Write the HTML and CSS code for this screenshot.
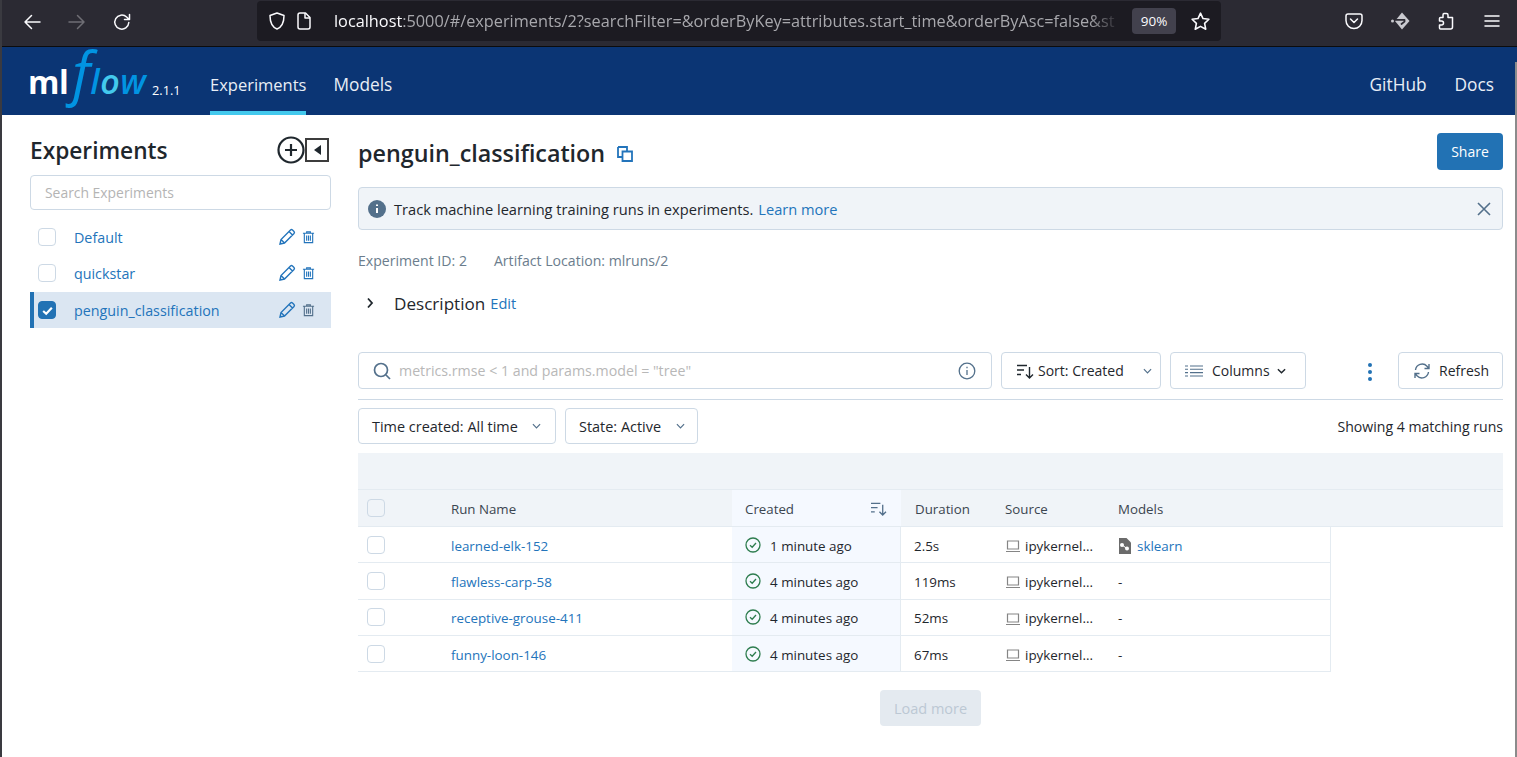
FILE: index.html
```html
<!DOCTYPE html>
<html lang="en">
<head>
<meta charset="utf-8">
<title>MLflow Experiments</title>
<link rel="stylesheet" href="styles.css">
</head>
<body>
<div class="scrollbar"></div>
<div class="browser">
  <div class="tool-group">
    <svg class="tool-ic" viewBox="0 0 20 20"><path d="M18 10H3M9.500 3.500 3 10l6.500 6.500"/></svg>
    <svg class="tool-ic dim" viewBox="0 0 20 20"><path d="M2 10h15M10.500 3.500 17 10l-6.500 6.500"/></svg>
    <svg class="tool-ic" viewBox="0 0 20 20"><path d="M16.800 10.500a7 7 0 1 1-2.200-5.500L17 7.300M17.500 2.500v5h-5"/></svg>
  </div>
  <div class="urlbar">
    <svg class="url-ic" viewBox="0 0 20 20"><path d="M10 2 3 4.500C3 11 5 16 10 18c5-2 7-7 7-13.500z"/></svg>
    <svg class="url-ic" viewBox="0 0 20 20"><path d="M4 4a2 2 0 0 1 2-2h5.500L16 6.500V16a2 2 0 0 1-2 2H6a2 2 0 0 1-2-2z"/><path d="M11 2v5h5"/></svg>
    <div class="url"><span class="url-host">localhost</span>:5000/#/experiments/2?searchFilter=&amp;orderByKey=attributes.start_time&amp;orderByAsc=false&amp;st</div>
    <span class="zoom-badge">90%</span>
    <svg class="url-ic star" viewBox="0 0 20 20"><path d="m10 2 2.400 5.200 5.600.7-4.100 3.900 1.100 5.600-5-2.800-5 2.800 1.100-5.600L2 7.900l5.600-.7z"/></svg>
  </div>
  <div class="tool-right">
    <svg class="tool-ic" viewBox="0 0 20 20"><path d="M4 3h12a2 2 0 0 1 2 2v4.500a8 8 0 0 1-16 0V5a2 2 0 0 1 2-2z"/><path d="m6.500 8 3.500 3.500L13.500 8"/></svg>
    <svg class="tool-ic solid" viewBox="0 0 20 20"><path d="M12 1.500 19.500 10 12 18.500 5 10z"/><circle cx="2.500" cy="10" r="1.500"/><path class="diamond-cut" d="M5.500 8.800h9v1.800l-3 2.400"/></svg>
    <svg class="tool-ic" viewBox="0 0 20 20"><path d="M8 2.500h2.500a1.500 1.500 0 0 1 1.500 1.500v2.500h4.500V16a2 2 0 0 1-2 2H4.500a1 1 0 0 1-1-1v-3h2a2 2 0 0 0 0-4h-2V7.500A1 1 0 0 1 4.500 6.500H7V4a1.500 1.500 0 0 1 1-1.500z"/></svg>
    <svg class="tool-ic" viewBox="0 0 20 20"><path d="M3 5h14M3 10h14M3 15h14"/></svg>
  </div>
</div>

<header class="topbar">
  <div class="logo"><span class="logo-ml">ml</span><span class="logo-f">f</span><span class="logo-low">l<span class="logo-o">o</span>w</span></div>
  <span class="version">2.1.1</span>
  <nav class="nav">
    <a class="nav-item active">Experiments</a>
    <a class="nav-item">Models</a>
  </nav>
  <nav class="nav-right">
    <a class="nav-item">GitHub</a>
    <a class="nav-item">Docs</a>
  </nav>
</header>

<div class="layout">
  <aside class="sidebar">
    <div class="side-head">
      <h1 class="side-title">Experiments</h1>
      <svg class="side-add" viewBox="0 0 28 28"><circle cx="14" cy="14" r="12.500"/><path d="M14 8v12M8 14h12"/></svg>
      <span class="side-collapse"><i class="tri"></i></span>
    </div>
    <div class="side-search">Search Experiments</div>
    <ul class="exp-list">
      <li class="exp">
        <span class="check"></span><span class="exp-name">Default</span>
        <svg class="act pen" viewBox="0 0 18 18"><path d="M2 16l1-4.500L12.500 2a1.500 1.500 0 0 1 2 0l1.500 1.500a1.500 1.500 0 0 1 0 2L6.500 15zM3 11.500 6.500 15M11 3.500 14.500 7"/></svg>
        <svg class="act bin" viewBox="0 0 14 14"><path d="M1 3h12M5 3V1.500h4V3M2.500 3v10h9V3M5 5.500v5.500M7 5.500v5.500M9 5.500v5.500"/></svg>
      </li>
      <li class="exp">
        <span class="check"></span><span class="exp-name">quickstar</span>
        <svg class="act pen" viewBox="0 0 18 18"><path d="M2 16l1-4.500L12.500 2a1.500 1.500 0 0 1 2 0l1.500 1.500a1.500 1.500 0 0 1 0 2L6.500 15zM3 11.500 6.500 15M11 3.500 14.500 7"/></svg>
        <svg class="act bin" viewBox="0 0 14 14"><path d="M1 3h12M5 3V1.500h4V3M2.500 3v10h9V3M5 5.500v5.500M7 5.500v5.500M9 5.500v5.500"/></svg>
      </li>
      <li class="exp selected">
        <span class="check on"><svg viewBox="0 0 12 12"><path d="m2 6.500 2.800 2.500L10 3.500"/></svg></span><span class="exp-name">penguin_classification</span>
        <svg class="act pen" viewBox="0 0 18 18"><path d="M2 16l1-4.500L12.500 2a1.500 1.500 0 0 1 2 0l1.500 1.500a1.500 1.500 0 0 1 0 2L6.500 15zM3 11.500 6.500 15M11 3.500 14.500 7"/></svg>
        <svg class="act bin grey" viewBox="0 0 14 14"><path d="M1 3h12M5 3V1.500h4V3M2.500 3v10h9V3M5 5.500v5.500M7 5.500v5.500M9 5.500v5.500"/></svg>
      </li>
    </ul>
  </aside>

  <main class="content">
    <div class="title-row">
      <h2 class="exp-title">penguin_classification</h2>
      <svg class="copy" viewBox="0 0 16 16"><path d="M1 1h9v4M5 11H1V1"/><path d="M5.500 5.500h9.500v9.500H5.500z"/></svg>
      <button class="share">Share</button>
    </div>
    <div class="banner">
      <svg class="banner-ic" viewBox="0 0 18 18"><circle cx="9" cy="9" r="9"/><path d="M9 8v5M9 4.500v1.500"/></svg>
      <span class="banner-text">Track machine learning training runs in experiments.</span>
      <a class="link banner-link">Learn more</a>
      <svg class="banner-x" viewBox="0 0 14 14"><path d="m1 1 12 12M13 1 1 13"/></svg>
    </div>
    <div class="meta"><span>Experiment ID: 2</span><span>Artifact Location: mlruns/2</span></div>
    <div class="desc">
      <svg class="desc-caret" viewBox="0 0 8 12"><path d="m2 1.500 4 4.500-4 4.500"/></svg>
      <span class="desc-label">Description</span>
      <a class="link desc-edit">Edit</a>
    </div>

    <div class="filters">
      <div class="search-box">
        <svg class="search-ic" viewBox="0 0 18 18"><circle cx="8" cy="8" r="6.500"/><path d="m13 13 4 4"/></svg>
        <span class="search-ph">metrics.rmse &lt; 1 and params.model = "tree"</span>
        <svg class="info-ic" viewBox="0 0 18 18"><circle cx="9" cy="9" r="7.800"/><path d="M9 8v5M9 4.800v1.400"/></svg>
      </div>
      <button class="ctl sort">
        <svg class="sort-ic" viewBox="0 0 18 16"><path d="M1 2.500h10M1 7h7M1 11.500h4M13.500 4v11M10 11.500l3.500 3.500 3.500-3.500"/></svg>
        <span>Sort: Created</span>
        <svg class="chev" viewBox="0 0 10 6"><path d="m1 1 4 4 4-4"/></svg>
      </button>
      <button class="ctl cols">
        <svg class="cols-ic" viewBox="0 0 18 12"><path d="M0 1h3M5 1h13M0 4.300h3M5 4.300h13M0 7.600h3M5 7.600h13M0 11h3M5 11h13"/></svg>
        <span>Columns</span>
        <svg class="chev dark" viewBox="0 0 10 6"><path d="m1 1 4 4 4-4"/></svg>
      </button>
      <span class="kebab"><i></i><i></i><i></i></span>
      <button class="ctl refresh">
        <svg class="refresh-ic" viewBox="0 0 18 18"><path d="M2.500 8A6.700 6.700 0 0 1 14 4.200L16 6.500M16 2v4.500h-4.500M15.500 10A6.700 6.700 0 0 1 4 13.800L2 11.500M2 16v-4.500h4.500"/></svg>
        <span>Refresh</span>
      </button>
    </div>

    <div class="filters2">
      <button class="ctl time"><span>Time created: All time</span><svg class="chev" viewBox="0 0 10 6"><path d="m1 1 4 4 4-4"/></svg></button>
      <button class="ctl state"><span>State: Active</span><svg class="chev" viewBox="0 0 10 6"><path d="m1 1 4 4 4-4"/></svg></button>
      <span class="matching">Showing 4 matching runs</span>
    </div>

    <div class="table">
      <div class="group-row"></div>
      <div class="row head">
        <div class="c-check"><span class="check head-check"></span></div>
        <div class="c-name"><span class="cell-text">Run Name</span></div>
        <div class="c-created head-created"><span class="cell-text">Created</span><svg class="sort-small" viewBox="0 0 18 16"><path d="M1 2.500h10M1 7h7M1 11.500h4M13.500 4v11M10 11.500l3.500 3.500 3.500-3.500"/></svg></div>
        <div class="c-dur"><span class="cell-text">Duration</span></div>
        <div class="c-src"><span class="cell-text">Source</span></div>
        <div class="c-mod"><span class="cell-text">Models</span></div>
      </div>
      <div class="row body">
        <div class="c-check"><span class="check"></span></div>
        <div class="c-name"><a class="link cell-text">learned-elk-152</a></div>
        <div class="c-created"><svg class="ok" viewBox="0 0 16 16"><circle cx="8" cy="8" r="7"/><path d="m5 8.200 2.200 2.100L11 6"/></svg><span class="cell-text">1 minute ago</span></div>
        <div class="c-dur"><span class="cell-text">2.5s</span></div>
        <div class="c-src"><svg class="laptop" viewBox="0 0 16 14"><path d="M2.500 2h11v8h-11zM1 12.500h14"/></svg><span class="cell-text">ipykernel...</span></div>
        <div class="c-mod"><svg class="model" viewBox="0 0 13 16"><path d="M1 0h7.500L13 4.500V16H1z"/><path d="M4 7l5 3.500" class="hole-line"/><circle cx="4" cy="7" r="2" class="hole"/><circle cx="9" cy="10.500" r="2" class="hole"/></svg><a class="link cell-text">sklearn</a></div>
      </div>
      <div class="row body">
        <div class="c-check"><span class="check"></span></div>
        <div class="c-name"><a class="link cell-text">flawless-carp-58</a></div>
        <div class="c-created"><svg class="ok" viewBox="0 0 16 16"><circle cx="8" cy="8" r="7"/><path d="m5 8.200 2.200 2.100L11 6"/></svg><span class="cell-text">4 minutes ago</span></div>
        <div class="c-dur"><span class="cell-text">119ms</span></div>
        <div class="c-src"><svg class="laptop" viewBox="0 0 16 14"><path d="M2.500 2h11v8h-11zM1 12.500h14"/></svg><span class="cell-text">ipykernel...</span></div>
        <div class="c-mod"><span class="cell-text">-</span></div>
      </div>
      <div class="row body">
        <div class="c-check"><span class="check"></span></div>
        <div class="c-name"><a class="link cell-text">receptive-grouse-411</a></div>
        <div class="c-created"><svg class="ok" viewBox="0 0 16 16"><circle cx="8" cy="8" r="7"/><path d="m5 8.200 2.200 2.100L11 6"/></svg><span class="cell-text">4 minutes ago</span></div>
        <div class="c-dur"><span class="cell-text">52ms</span></div>
        <div class="c-src"><svg class="laptop" viewBox="0 0 16 14"><path d="M2.500 2h11v8h-11zM1 12.500h14"/></svg><span class="cell-text">ipykernel...</span></div>
        <div class="c-mod"><span class="cell-text">-</span></div>
      </div>
      <div class="row body">
        <div class="c-check"><span class="check"></span></div>
        <div class="c-name"><a class="link cell-text">funny-loon-146</a></div>
        <div class="c-created"><svg class="ok" viewBox="0 0 16 16"><circle cx="8" cy="8" r="7"/><path d="m5 8.200 2.200 2.100L11 6"/></svg><span class="cell-text">4 minutes ago</span></div>
        <div class="c-dur"><span class="cell-text">67ms</span></div>
        <div class="c-src"><svg class="laptop" viewBox="0 0 16 14"><path d="M2.500 2h11v8h-11zM1 12.500h14"/></svg><span class="cell-text">ipykernel...</span></div>
        <div class="c-mod"><span class="cell-text">-</span></div>
      </div>
    </div>
    <div class="load-wrap"><button class="load">Load more</button></div>
  </main>
</div>
</body>
</html>
```
FILE: styles.css
```css
* { box-sizing: border-box; }
html, body { margin: 0; height: 757px; overflow: hidden; }
body {
  font-family: "Open Sans", sans-serif;
  font-size: 14.1px;
  color: #1f272d;
  background: #fff;
  border-left: 2px solid #3a3a40;
  display: flex;
  flex-direction: column;
}
svg { display: block; flex: none; fill: none; }
h1, h2, ul { margin: 0; padding: 0; }
button { font: inherit; color: inherit; background: #fff; }
a { text-decoration: none; }
.link { color: #2374bb; }
.scrollbar { position: absolute; top: 62px; right: 0; bottom: 0; width: 2.500px; background: #8b8b8b; z-index: 5; }

/* browser chrome */
.browser {
  height: 47px;
  flex: none;
  background: #2b2a33;
  border-bottom: 1px solid #0c0c0d;
  display: flex;
  align-items: flex-start;
  padding-left: 20px;
}
.tool-group { display: flex; gap: 25px; padding-top: 12px; width: 235px; }
.tool-ic { width: 20px; height: 20px; stroke: #fbfbfe; stroke-width: 1.500; stroke-linecap: round; stroke-linejoin: round; }
.tool-ic.dim { stroke: #6f6e75; }
.tool-ic.solid { fill: #c9c9cf; stroke: none; }
.tool-ic .diamond-cut { fill: none; stroke: #2b2a33; stroke-width: 1.800; }
.urlbar {
  margin-top: 1px;
  width: 964px;
  height: 40px;
  background: #1c1b22;
  border-radius: 4px;
  display: flex;
  align-items: center;
  padding: 0 10px;
  color: #a8a8ad;
  font-size: 16.300px;
}
.url-ic { width: 20px; height: 20px; stroke: #fbfbfe; stroke-width: 1.500; stroke-linejoin: round; margin-right: 7px; }
.url {
  width: 786px;
  margin-left: 13px;
  white-space: nowrap;
  overflow: hidden;
  -webkit-mask-image: linear-gradient(to right, #000 96%, transparent);
  mask-image: linear-gradient(to right, #000 96%, transparent);
}
.url-host { color: #fbfbfe; }
.zoom-badge {
  margin-left: 12px;
  width: 44px;
  height: 26px;
  background: #42414d;
  border-radius: 4px;
  color: #fbfbfe;
  font-size: 13.500px;
  display: flex;
  align-items: center;
  justify-content: center;
}
.star { margin: 0 0 0 14px; width: 21px; height: 21px; }
.tool-right { margin-left: 123px; padding-top: 11px; display: flex; gap: 26px; }

/* header */
.topbar {
  height: 68px;
  flex: none;
  background: #0b3574;
  color: #e8eef6;
  display: flex;
  align-items: center;
  padding: 0 23px 0 26px;
}
.logo { display: block; width: 123px; height: 68px; line-height: 70px; white-space: nowrap; }
.logo-ml { font-weight: 700; font-size: 32px; color: #fff; letter-spacing: -.5px; }
.logo-f { font-style: italic; font-weight: 400; font-size: 58px; color: #0194e2; line-height: 0; margin-left: 4px; }
.logo-low { font-style: italic; font-weight: 600; font-size: 34px; color: #0194e2; line-height: 0; letter-spacing: .5px; margin-left: 0; }
.logo-o { color: #43c9ed; }
.version { font-size: 12.800px; color: #fff; width: 58px; margin-top: 18px; margin-left: 1px; }
.nav, .nav-right { display: flex; gap: 27px; height: 100%; }
.nav-right { margin-left: auto; gap: 28px; }
.nav-item { font-size: 17.300px; color: #e8eef6; display: flex; align-items: center; height: 100%; border-bottom: 4px solid transparent; padding-top: 10px; }
.nav-item.active { border-bottom-color: #43c9ed; font-size: 16.500px; }

/* layout */
.layout { flex: 1; display: flex; min-height: 0; padding-left: 28px; }
.sidebar { width: 301px; flex: none; padding-top: 20px; }
.side-head { display: flex; align-items: center; height: 31px; }
.side-title { font-size: 22.700px; font-weight: 600; color: #1f272d; flex: 1; line-height: 31px; }
.side-add { width: 28px; height: 28px; stroke: #1f272d; stroke-width: 2.200; margin-top: -2px; }
.side-collapse { width: 24px; height: 24px; border: 2px solid #3c3c3c; margin-right: 2px; margin-top: -2px; display: flex; align-items: center; justify-content: center; }
.tri { width: 0; height: 0; border-style: solid; border-width: 5.500px 7px 5.500px 0; border-color: transparent #1f272d transparent transparent; }
.side-search {
  margin-top: 9px;
  height: 35px;
  border: 1px solid #cdd9e5;
  border-radius: 4px;
  color: #b4b4b4;
  font-size: 13.900px;
  padding: 0 14px;
  line-height: 33px;
}
.exp-list { list-style: none; margin-top: 9px; }
.exp { height: 36px; display: flex; align-items: center; padding: 0 16px 0 8px; font-size: 14.300px; }
.exp.selected { background: #dbe6f2; border-left: 4px solid #2272b4; padding-left: 4px; margin-top: 1px; }
.check { width: 18px; height: 18px; border: 1px solid #cdd9e5; border-radius: 4px; display: block; background: #fff; flex: none; }
.check.on { background: #2272b4; border-color: #2272b4; display: flex; align-items: center; justify-content: center; }
.check.on svg { width: 13px; height: 13px; stroke: #fff; stroke-width: 2; }
.exp-name { margin-left: 18px; flex: 1; white-space: nowrap; color: #2374bb; }
.act { stroke: #2374bb; }
.pen { width: 18px; height: 18px; stroke-width: 1.400; }
.bin { width: 13px; height: 14px; margin-left: 6px; stroke-width: 1.200; }
.bin.grey { stroke: #53708b; }

/* content */
.content { width: 1145px; margin-left: 27px; flex: none; padding-top: 18px; }
.title-row { display: flex; align-items: center; height: 37px; }
.exp-title { font-size: 23.300px; font-weight: 600; line-height: 37px; color: #1f272d; padding-top: 3px; }
.copy { width: 16px; height: 16px; margin-left: 12px; margin-top: 4px; stroke: #2374bb; stroke-width: 1.800; }
.share { margin-left: auto; background: #2272b4; color: #fff; border: 0; border-radius: 4px; width: 66px; height: 37px; padding: 0; font-size: 14px; }
.banner {
  margin-top: 17px;
  height: 43px;
  background: #f0f4f8;
  border: 1px solid #cdd9e5;
  border-radius: 4px;
  display: flex;
  align-items: center;
  padding: 0 11px 0 9px;
  font-size: 14.640px;
}
.banner-ic { width: 18px; height: 18px; fill: #53708b; stroke: none; }
.banner-ic path { stroke: #fff; stroke-width: 2; }
.banner-text { margin-left: 8px; color: #1f272d; }
.banner-link { margin-left: 5px; }
.banner-x { width: 14px; height: 14px; margin-left: auto; stroke: #53708b; stroke-width: 1.600; }
.meta { display: flex; gap: 27px; margin-top: 22px; color: #6b7d8d; line-height: 18px; }
.desc { display: flex; align-items: center; margin-top: 22px; height: 22px; }
.desc-caret { width: 8px; height: 12px; margin-left: 8px; stroke: #1f272d; stroke-width: 1.800; }
.desc-label { font-size: 17.100px; margin-left: 20px; }
.desc-edit { margin-left: 5px; font-size: 14.600px; }
.filters { display: flex; margin-top: 38px; height: 48px; border-bottom: 1px solid #cdd9e5; padding-bottom: 10px; align-items: stretch; }
.search-box { width: 634px; border: 1px solid #cdd9e5; border-radius: 4px; display: flex; align-items: center; padding: 0 15px 0 14px; }
.search-ic { width: 18px; height: 18px; stroke: #53708b; stroke-width: 1.700; }
.search-ph { margin-left: 8px; color: #b8b8b8; flex: 1; font-size: 14.200px; }
.info-ic { width: 18px; height: 18px; stroke: #53708b; stroke-width: 1.300; }
.ctl { border: 1px solid #cdd9e5; border-radius: 4px; display: flex; align-items: center; padding: 0; white-space: nowrap; font-size: 14px; }
.sort { width: 160px; margin-left: 9px; padding-left: 14px; }
.sort-ic { width: 18px; height: 16px; stroke: #1f272d; stroke-width: 1.400; margin-right: 4px; }
.chev { width: 9px; height: 6px; stroke: #53708b; stroke-width: 1.300; margin-left: auto; }
.chev.dark { stroke: #1f272d; stroke-width: 1.600; }
.sort .chev { margin-right: 8px; }
.cols { width: 136px; margin-left: 9px; padding-left: 14px; }
.cols-ic { width: 18px; height: 12px; stroke: #53708b; stroke-width: 1.100; margin-right: 9px; }
.cols .chev { margin-left: 7px; }
.kebab { width: 4px; margin-left: 62px; margin-right: 26px; display: flex; flex-direction: column; justify-content: center; gap: 3px; padding-top: 2px; }
.kebab i { width: 4px; height: 4px; border-radius: 50%; background: #2272b4; display: block; }
.refresh { width: 105px; padding-left: 14px; }
.refresh-ic { width: 18px; height: 18px; stroke: #53708b; stroke-width: 1.400; margin-right: 8px; }
.filters2 { display: flex; align-items: stretch; margin-top: 8px; height: 36px; }
.time, .state { font-size: 14.450px; }
.time { width: 198px; padding: 0 14px 0 13px; }
.state { width: 133px; margin-left: 9px; padding: 0 12px 0 13px; }
.matching { margin-left: auto; align-self: center; font-size: 14.100px; }
.table { margin-top: 9px; }
.group-row { height: 37px; background: #f0f4f8; border-bottom: 1px solid #e4ebf1; }
.row { display: grid; grid-template-columns: 93px 281px 169px 90px 113px 1fr; align-items: stretch; }
.row > div { display: flex; align-items: center; white-space: nowrap; }
.row.head { height: 37px; background: #f0f4f8; border-bottom: 1px solid #e4ebf1; font-weight: 500; font-size: 13.300px; color: #3b4650; }
.row.head .cell-text { padding-top: 2px; }
.row.body { width: 973px; height: 36.300px; border-bottom: 1px solid #e4ebf1; border-right: 1px solid #e4ebf1; font-size: 13.400px; }
.row.body .cell-text { padding-top: 2px; }
.c-check { padding-left: 9px; }
.c-created { padding-left: 13px; background: #f5f9ff; border-right: 1px solid #e4ebf1; }
.head-created { padding: 0 13px; justify-content: space-between; border-right: 0; }
.c-dur { padding-left: 13px; }
.head .c-dur, .head .c-src, .head .c-mod { padding-left: 14px; }
.c-src { padding-left: 14px; }
.c-mod { padding-left: 14px; }
.head-check { background: #f0f4f8; }
.sort-small { width: 17px; height: 15px; stroke: #53708b; stroke-width: 1.400; margin-right: 1px; }
.ok { width: 16px; height: 16px; stroke: #2e7d4f; stroke-width: 1.300; margin-right: 9px; }
.laptop { width: 16px; height: 14px; stroke: #858585; stroke-width: 1.200; margin-right: 4px; margin-top: 3px; }
.model { width: 13px; height: 16px; fill: #6b6b6b; margin-right: 6px; margin-top: 2px; }
.hole { fill: #fff; }
.hole-line { stroke: #fff; stroke-width: 1; }
.load-wrap { display: flex; justify-content: center; margin-top: 18px; }
.load { width: 101px; height: 36px; padding: 0; background: #e4eaf0; border: 0; border-radius: 4px; color: #bcc8d4; font-size: 14.500px; }
```
